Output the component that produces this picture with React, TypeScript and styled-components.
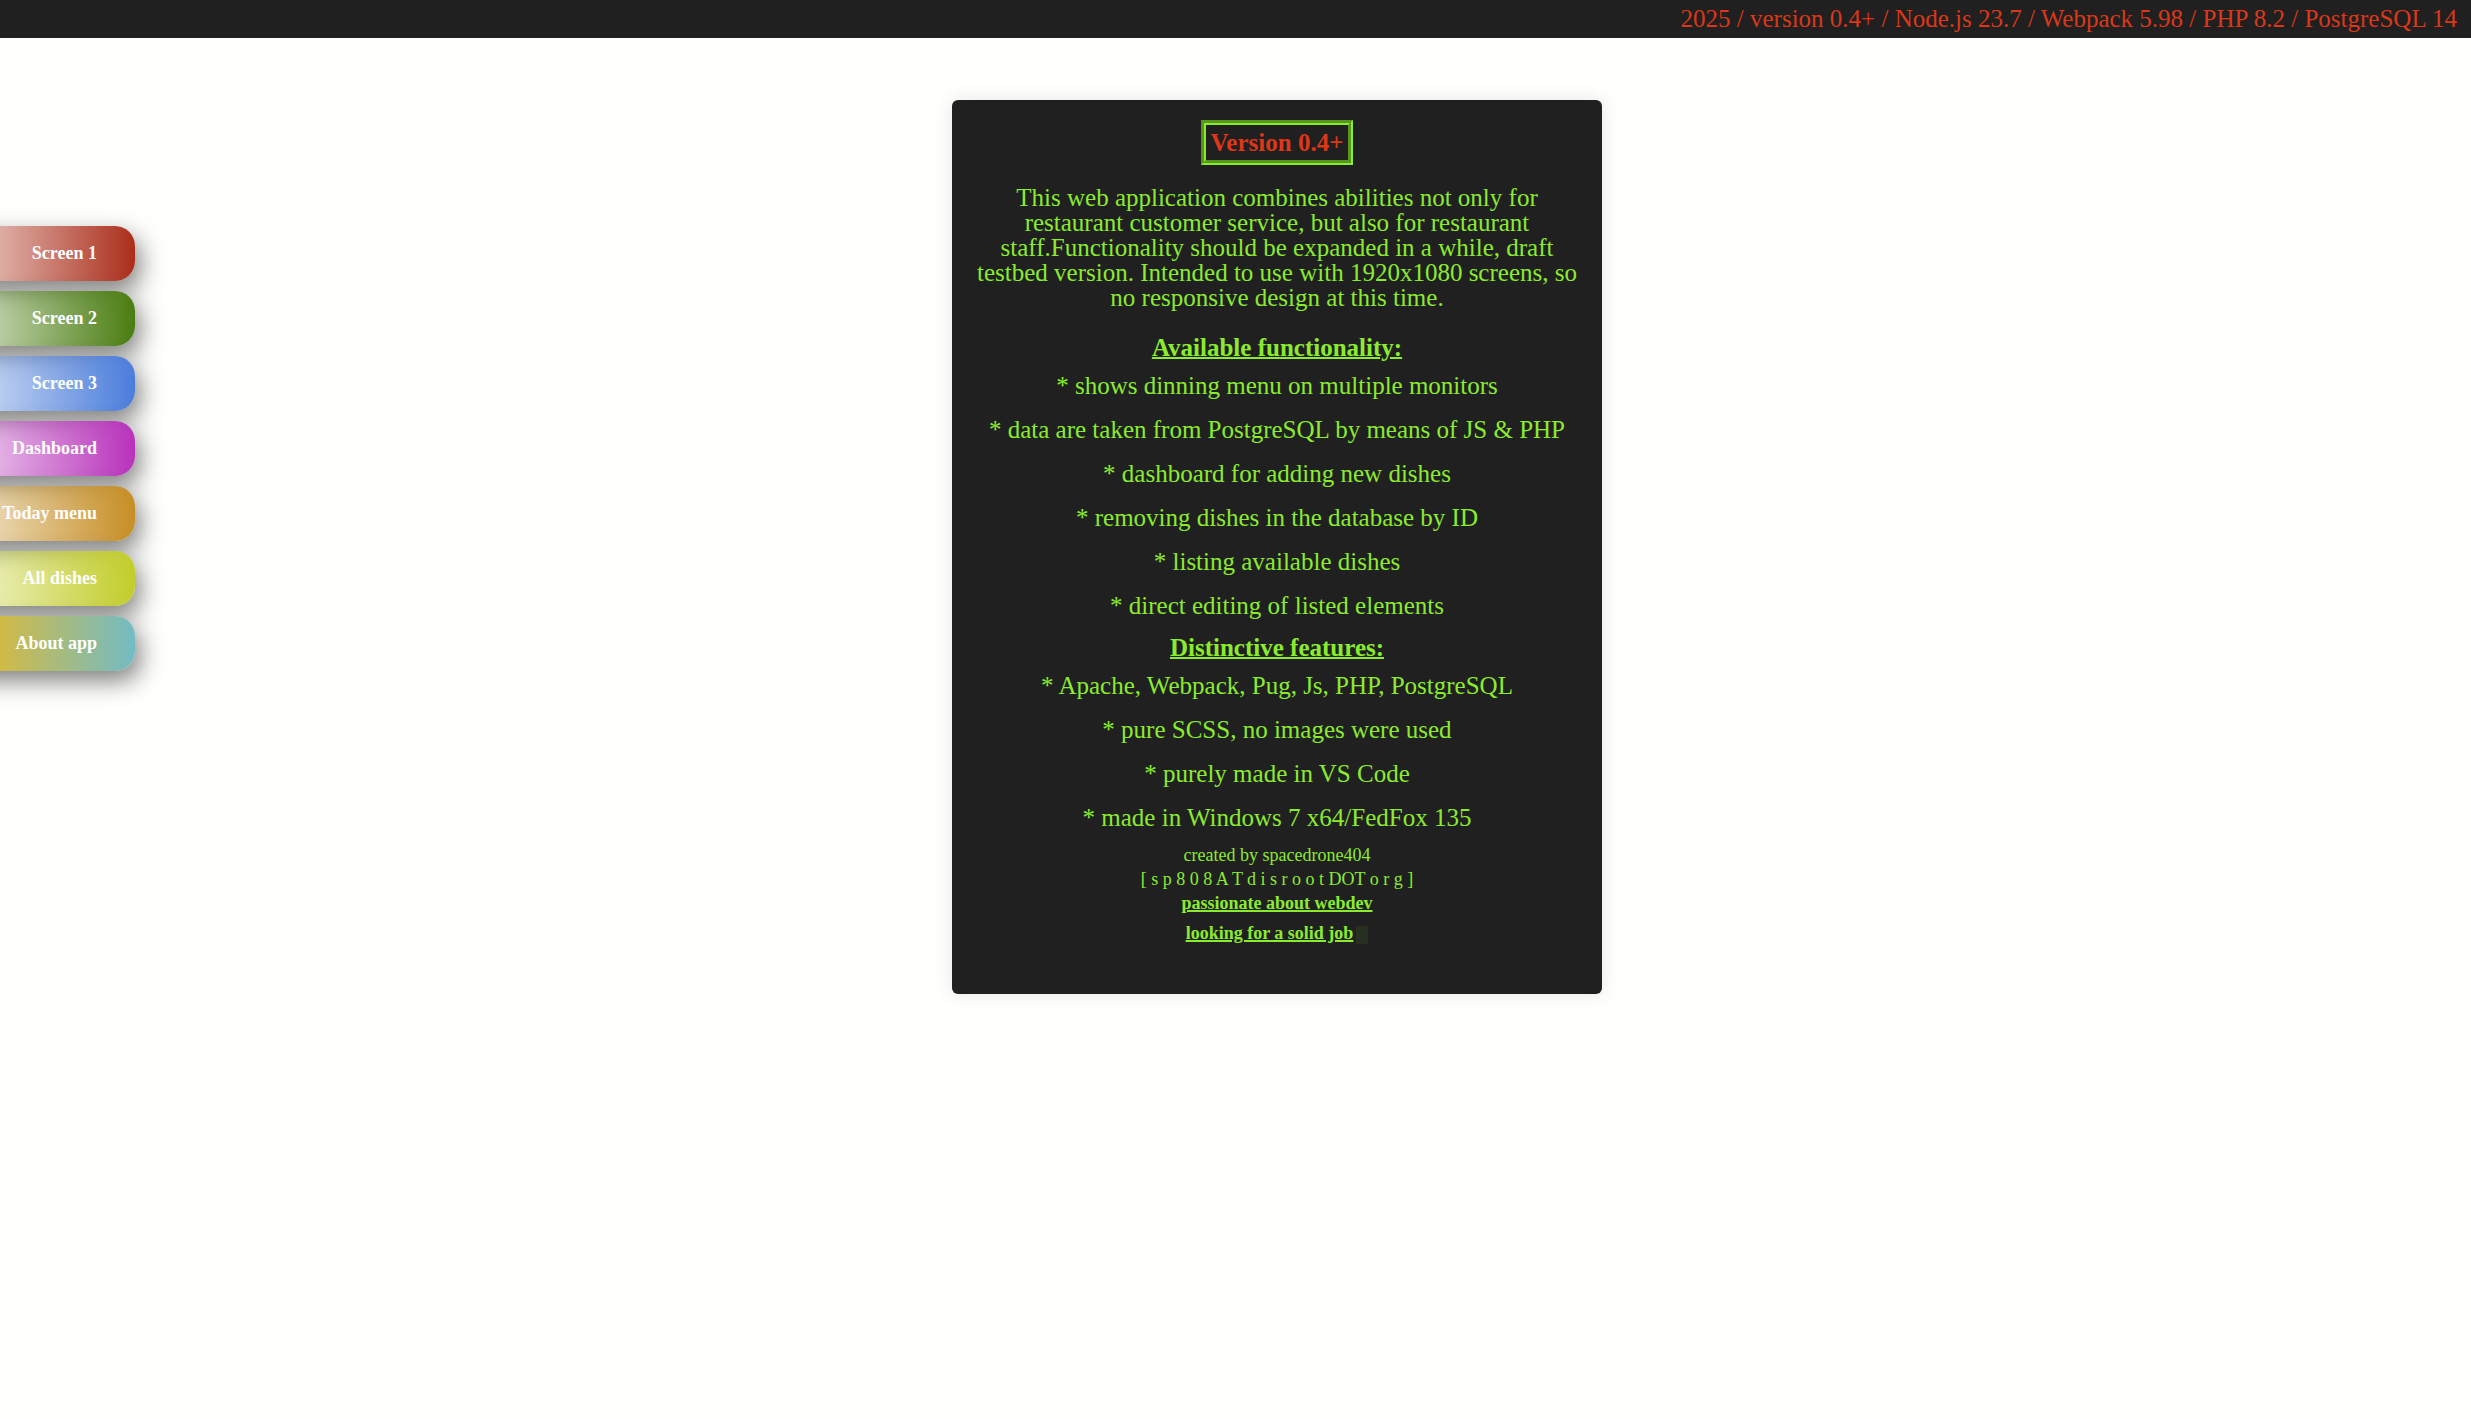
import React from "react";
import styled, { createGlobalStyle } from "styled-components";

const GlobalStyle = createGlobalStyle`
  * { box-sizing: border-box; }
  body {
    margin: 0;
    background: #fffffe;
    font-family: "Liberation Serif", "Times New Roman", serif;
    font-size: 25px;
    line-height: 25px;
  }
`;

const TopBar = styled.header`
  padding: 6px 14px 7px;
  background: #202020;
  color: #dc3719;
  text-align: right;
`;

const Layout = styled.div`
  display: flex;
  align-items: flex-start;
`;

const SideNav = styled.nav`
  display: flex;
  flex-direction: column;
  flex: none;
  gap: 10px;
  width: 135px;
  padding-top: 188px;
`;

const NavButton = styled.button<{ $from: string; $to: string }>`
  height: 55px;
  margin-left: -65px;
  padding: 0 38px 2px 0;
  border: 0;
  border-radius: 0 20px 20px 0;
  background: linear-gradient(to right, ${(p) => p.$from}, ${(p) => p.$to});
  box-shadow: 5px 10px 25px rgba(0, 0, 0, 0.5);
  color: #fefefe;
  font: bold 18px/20px "Liberation Serif", "Times New Roman", serif;
  text-align: right;
  cursor: pointer;
`;

const Main = styled.main`
  flex: 1;
  display: flex;
  justify-content: center;
  padding: 62px 52px 62px 0;
`;

const Card = styled.article`
  display: flex;
  flex-direction: column;
  align-items: center;
  width: 650px;
  padding: 20px 20px 49px;
  border-radius: 6px;
  background: #202020;
  box-shadow: 0 0 20px rgba(0, 0, 0, 0.1);
  color: #8aeb2f;
  text-align: center;
`;

const Version = styled.h1`
  margin: 0 0 20px;
  padding: 5px;
  border: 5px groove #8aeb2f;
  color: #dc3719;
  font-size: 25px;
  line-height: 25px;
`;

const Intro = styled.p`
  margin: 0 0 25px;
`;

const SectionTitle = styled.h2`
  margin: 0 0 13px;
  font-size: 25px;
  line-height: 25px;
  text-decoration: underline 2px;
`;

const List = styled.ul<{ $after: number }>`
  display: flex;
  flex-direction: column;
  gap: 19px;
  margin: 0 0 ${(p) => p.$after}px;
  padding: 0;
  list-style: none;
`;

const Credits = styled.footer`
  font-size: 18px;
  line-height: 24px;
`;

const Line = styled.p<{ $spaced?: boolean }>`
  margin: 0 0 ${(p) => (p.$spaced ? "6px" : "0")};
`;

const Strong = styled.strong`
  text-decoration: underline 2px;
`;

const Cursor = styled.span`
  display: inline-block;
  width: 12px;
  height: 18px;
  margin-left: 3px;
  background: #8aeb2f;
  opacity: 0.08;
  vertical-align: middle;
`;

const navItems = [
  { label: "Screen 1", from: "rgba(171, 46, 27, 0.1)", to: "#ab2e1b" },
  { label: "Screen 2", from: "rgba(74, 125, 17, 0.1)", to: "#4a7d11" },
  { label: "Screen 3", from: "rgba(74, 125, 219, 0.1)", to: "#4a7ddb" },
  { label: "Dashboard", from: "rgba(184, 50, 188, 0.1)", to: "#b832bc" },
  { label: "Today menu", from: "rgba(198, 142, 37, 0.1)", to: "#c68e25" },
  { label: "All dishes", from: "rgba(194, 205, 41, 0.1)", to: "#c2cd29" },
  { label: "About app", from: "#ffb90a", to: "#72bcc4" },
];

const functionality = [
  "shows dinning menu on multiple monitors",
  "data are taken from PostgreSQL by means of JS & PHP",
  "dashboard for adding new dishes",
  "removing dishes in the database by ID",
  "listing available dishes",
  "direct editing of listed elements",
];

const features = [
  "Apache, Webpack, Pug, Js, PHP, PostgreSQL",
  "pure SCSS, no images were used",
  "purely made in VS Code",
  "made in Windows 7 x64/FedFox 135",
];

const Bullets = ({ items, after }: { items: string[]; after: number }) => (
  <List $after={after}>
    {items.map((item) => (
      <li key={item}>{`* ${item}`}</li>
    ))}
  </List>
);

export default function App() {
  return (
    <>
      <GlobalStyle />
      <TopBar>2025 / version 0.4+ / Node.js 23.7 / Webpack 5.98 / PHP 8.2 / PostgreSQL 14</TopBar>
      <Layout>
        <SideNav>
          {navItems.map((item) => (
            <NavButton key={item.label} type="button" $from={item.from} $to={item.to}>
              {item.label}
            </NavButton>
          ))}
        </SideNav>
        <Main>
          <Card>
            <Version>Version 0.4+</Version>
            <Intro>
              This web application combines abilities not only for restaurant customer service, but
              also for restaurant staff.Functionality should be expanded in a while, draft testbed
              version. Intended to use with 1920x1080 screens, so no responsive design at this time.
            </Intro>
            <SectionTitle>Available functionality:</SectionTitle>
            <Bullets items={functionality} after={17} />
            <SectionTitle>Distinctive features:</SectionTitle>
            <Bullets items={features} after={13} />
            <Credits>
              <Line>created by spacedrone404</Line>
              <Line>[ s p 8 0 8 A T d i s r o o t DOT o r g ]</Line>
              <Line $spaced>
                <Strong>passionate about webdev</Strong>
              </Line>
              <Line>
                <Strong>looking for a solid job</Strong>
                <Cursor />
              </Line>
            </Credits>
          </Card>
        </Main>
      </Layout>
    </>
  );
}
